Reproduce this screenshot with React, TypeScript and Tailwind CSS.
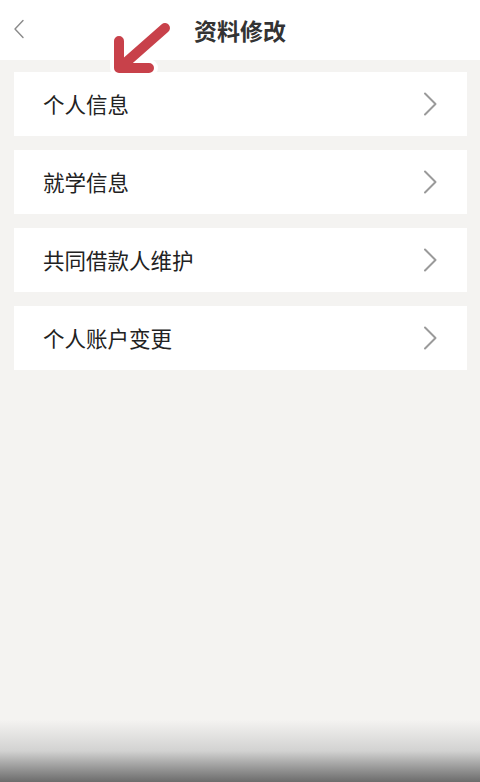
const items = ["个人信息", "就学信息", "共同借款人维护", "个人账户变更"];

const ChevronRight = () => (
    <svg className="w-[14px] h-[24px]" viewBox="0 0 14 24" fill="none" stroke="#9a9a9a" strokeWidth={2} strokeLinecap="round" strokeLinejoin="round">
        <path d="M2 1.5L12.5 12L2 22.5" />
    </svg>
);

const App = () => {
    return (
        <div className="relative w-[480px] h-[782px] flex flex-col overflow-hidden bg-[#f4f3f1] font-['Noto_Sans_CJK_SC','Noto_Sans',sans-serif]">
            {/* header */}
            <div className="relative h-[60px] shrink-0 bg-white flex items-center justify-center">
                <button className="absolute left-[13px] top-[19px]">
                    <svg className="w-[12px] h-[20px]" viewBox="0 0 12 20" fill="none" stroke="#8a8a8a" strokeWidth={1.4} strokeLinecap="round" strokeLinejoin="round">
                        <path d="M10 1.5L2 10L10 18.5" />
                    </svg>
                </button>
                <h1 className="text-[23px] font-bold text-[#333] leading-none">资料修改</h1>
            </div>

            {/* list */}
            <div className="flex-1 flex flex-col gap-[14px] pt-[12px] pl-[14px] pr-[13px]">
                {items.map((label) => (
                    <div key={label} className="h-[64px] bg-white flex items-center justify-between pl-[29px] pr-[30px]">
                        <span className="text-[21.5px] text-[#222] leading-none">{label}</span>
                        <ChevronRight />
                    </div>
                ))}
            </div>

            {/* bottom shade */}
            <div className="pointer-events-none absolute left-0 right-0 bottom-0 h-[62px] bg-gradient-to-b from-[#f4f3f1]/0 via-[#d2d2d1] to-[#6c6c6c]" />

            {/* annotation arrow */}
            <svg className="pointer-events-none absolute left-0 top-0" width="200" height="90" viewBox="0 0 200 90" fill="none" strokeLinecap="round" strokeLinejoin="round">
                <g stroke="#ffffff" strokeWidth={18}>
                    <path d="M165 28L123 65" />
                    <path d="M119 41L119 68L149 68" />
                </g>
                <g stroke="#c8414a" strokeWidth={10}>
                    <path d="M165 28L123 65" />
                    <path d="M119 41L119 68L149 68" />
                </g>
            </svg>
        </div>
    );
};

export default App;
